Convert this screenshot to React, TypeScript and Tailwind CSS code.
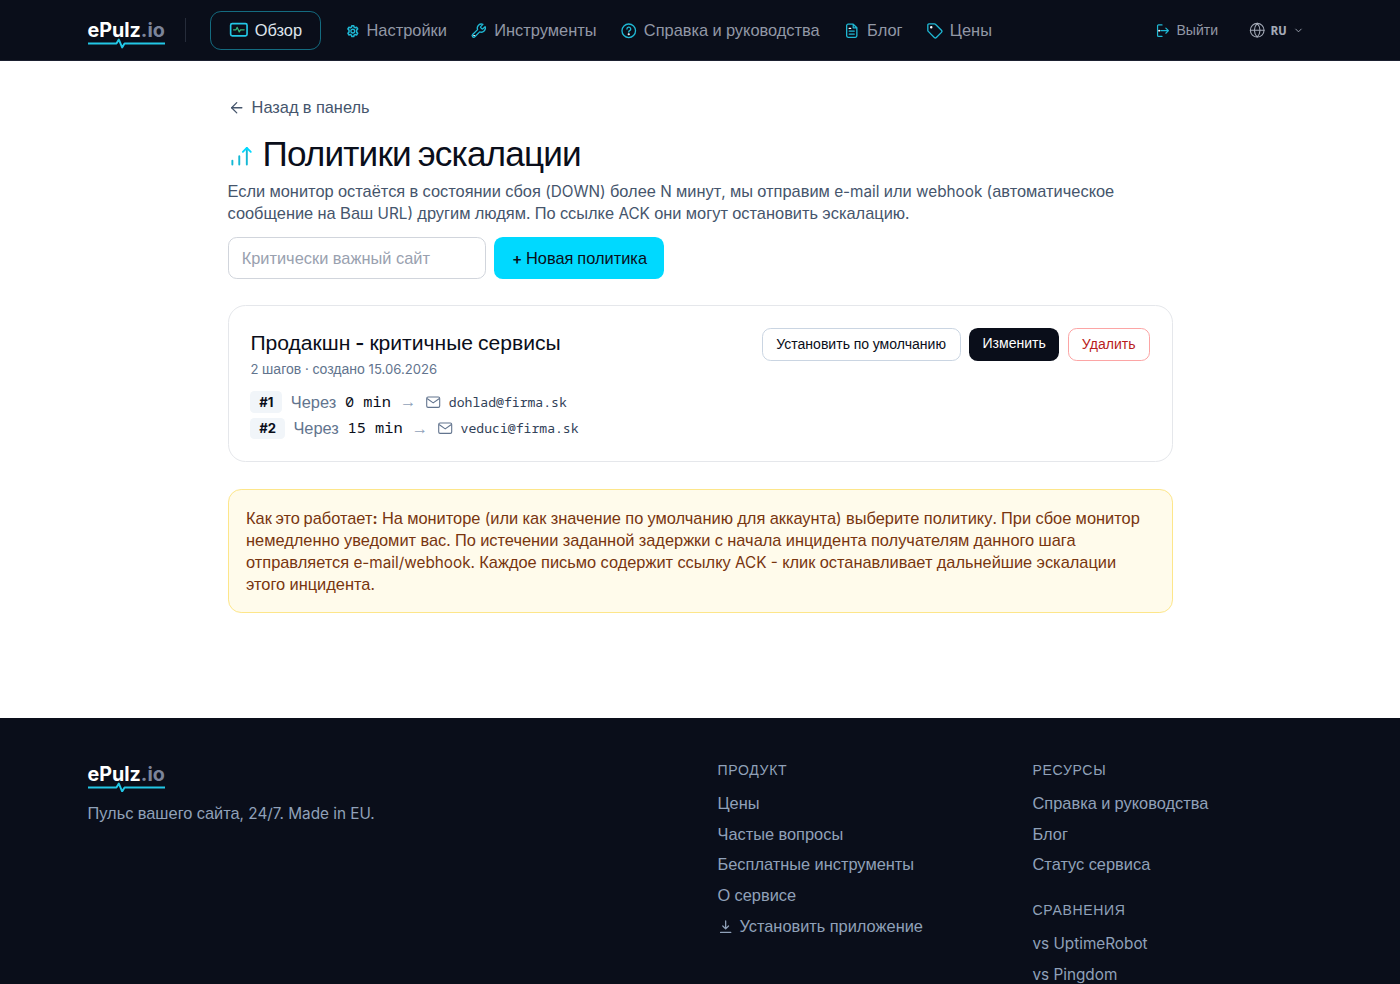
import type { ReactNode } from "react";
import { ArrowLeft, ChevronDown } from "lucide-react";

/** Sets Cyrillic runs in the wider sans face, everything else stays in Inter. */
function T({ children }: { children: string }) {
  return (
    <>
      {children.split(/([\u0400-\u04FF→]+)/).map((part, i) =>
        i % 2 ? (
          <span key={i} className="font-['Liberation_Sans',sans-serif] text-[1.0712em] leading-none font-normal">
            {part}
          </span>
        ) : (
          part
        ),
      )}
    </>
  );
}

function Icon({ children, className = "size-4", width = 1.6 }: { children: ReactNode; className?: string; width?: number }) {
  return (
    <svg
      viewBox="0 0 24 24"
      fill="none"
      stroke="currentColor"
      strokeWidth={width}
      strokeLinecap="round"
      strokeLinejoin="round"
      className={`shrink-0 ${className}`}
    >
      {children}
    </svg>
  );
}

function Logo() {
  return (
    <div className="flex w-[71px] flex-col">
      <div className="pt-[1.5px] text-[18px] leading-5 font-bold text-white">
        ePulz<span className="text-[#7c8499]">.io</span>
      </div>
      <svg viewBox="0 0 71 10" className="-mt-[3.5px] h-2.5 w-[71px]" fill="none" stroke="#22c7e6" strokeWidth="1.8">
        <path d="M0 5h26l2.200-3.600 3 7.200 2.200-3.600H71" strokeLinejoin="round" />
      </svg>
    </div>
  );
}

const navItems = [
  {
    label: "Настройки",
    icon: (
      <>
        <circle cx="14.800" cy="12.500" r="2.600" />
        <path
          d="m13.500 5 2.600 0 .5 2 1.600.9 2-.6 1.300 2.300-1.500 1.500v2.800l1.500 1.500-1.300 2.300-2-.6-1.600.9-.5 2h-2.600l-.5-2-1.600-.9-2 .6-1.300-2.300 1.500-1.500v-2.800l-1.500-1.500 1.300-2.300 2 .6 1.600-.9z"
          strokeWidth="2.100"
        />
      </>
    ),
  },
  {
    label: "Инструменты",
    icon: (
      <>
        <path d="M14.7 6.3a1 1 0 0 0 0 1.4l1.6 1.6a1 1 0 0 0 1.4 0l3-3a5.6 5.6 0 0 1-7.4 7.2L6.6 20.2a2.1 2.1 0 0 1-3-3l6.8-6.700a5.6 5.6 0 0 1 7.3-7.3z" />
        <circle cx="5.5" cy="18.5" r=".5" fill="#fff" stroke="#fff" strokeWidth="1.2" />
      </>
    ),
  },
  {
    label: "Справка и руководства",
    icon: (
      <>
        <circle cx="12" cy="12" r="9.3" />
        <path d="M9.5 9.6a2.6 2.6 0 1 1 3.8 2.3c-.9.5-1.3 1-1.3 1.8" />
        <circle cx="12" cy="16.8" r=".6" fill="#fff" stroke="#fff" />
      </>
    ),
  },
  {
    label: "Блог",
    icon: (
      <>
        <path d="M14 3H7a2 2 0 0 0-2 2v14a2 2 0 0 0 2 2h10a2 2 0 0 0 2-2V8zM14 3v5h5M8.5 12.5h7M8.5 16.5h7" />
        <path d="M8.5 8.8h2" stroke="#fff" />
      </>
    ),
  },
  {
    label: "Цены",
    icon: (
      <>
        <path d="M2.500 4A1.500 1.500 0 0 1 4 2.500h7.500a2 2 0 0 1 1.400.6l8.300 8.300a2 2 0 0 1 0 2.800l-7 7a2 2 0 0 1-2.800 0l-8.300-8.300a2 2 0 0 1-.6-1.400z" />
        <circle cx="7.200" cy="7.200" r=".8" fill="#fff" stroke="#fff" />
      </>
    ),
  },
];

function Header() {
  return (
    <header className="border-b border-[#1b2030] bg-[#0a0e1a]">
      <div className="mx-auto flex h-[55px] w-[1120px] items-center">
        <div className="pt-[7px]">
          <Logo />
        </div>
        <span className="ml-[18px] h-[22px] w-px bg-[#262c3a]" />
        <nav className="ml-[22px] flex items-center gap-[21.3px] text-sm text-[#9298a6]">
          <a className="-mr-[1.3px] mt-px flex h-9 items-center gap-1.5 rounded-[10px] border border-[#146b80] px-4 text-[#dfe4ec]">
            <Icon className="mb-0.5 size-[18px] text-[#22c7e6]">
              <rect x="2" y="4.4" width="20" height="15" rx="2" strokeWidth="2" />
              <path d="M5.500 12h3l1.500-3 2.500 5.500 1.500-2.500h4.500" stroke="#34b57a" strokeWidth="1.500" />
            </Icon>
            <span>
              <T>Обзор</T>
            </span>
          </a>
          {navItems.map((item) => (
            <a key={item.label} className="flex items-center gap-1.5 pt-[1.5px] whitespace-nowrap">
              <Icon className="size-4 text-[#1fb8d4]" width={1.8}>
                {item.icon}
              </Icon>
              <span>
                <T>{item.label}</T>
              </span>
            </a>
          ))}
        </nav>
        <div className="ml-auto flex items-center text-xs text-[#9298a6]">
          <a className="flex items-center gap-1.5 pt-[1.5px]">
            <Icon className="size-3.5 text-[#1fb8d4]">
              <path d="M11 3H5.500A1.500 1.500 0 0 0 4 4.500v15A1.500 1.500 0 0 0 5.500 21H11M9 12h12M17 8l4 4-4 4" strokeWidth="1.900" />
              <circle cx="6.500" cy="12" r=".7" fill="#fff" stroke="#fff" />
            </Icon>
            <span>
              <T>Выйти</T>
            </span>
          </a>
          <a className="ml-[28px] flex items-center pt-[0.5px] pr-[8px] text-[#a3a9b6]">
            <Icon className="size-[15px]">
              <circle cx="12" cy="12" r="10" />
              <path d="M2 12h20M12 2c5.500 6 5.500 14 0 20M12 2c-5.500 6-5.500 14 0 20" />
            </Icon>
            <span className="ml-[5px] font-['Noto_Sans_Mono',monospace] font-bold">RU</span>
            <ChevronDown className="ml-1.5 size-2.5" />
          </a>
        </div>
      </div>
    </header>
  );
}

const steps = [
  { no: "#1", delay: "0 min", email: "dohlad@firma.sk" },
  { no: "#2", delay: "15 min", email: "veduci@firma.sk" },
];

function PolicyCard() {
  return (
    <section className="mt-6 rounded-2xl border border-gray-200 p-5">
      <div className="flex items-start justify-between">
        <div>
          <h2 className="text-lg leading-7 font-semibold text-[#0a0e1a]">
            <T>Продакшн - критичные сервисы</T>
          </h2>
          <p className="mt-0.5 text-xs text-slate-500">
            <T>2 шагов · создано 15.06.2026</T>
          </p>
        </div>
        <div className="flex gap-2 text-xs">
          <button className="rounded-lg border border-slate-300 px-[12.500px] py-1.5 text-[#0a0e1a]">
            <T>Установить по умолчанию</T>
          </button>
          <a className="rounded-lg bg-[#0a0e1a] px-3 py-1.5 text-white">
            <T>Изменить</T>
          </a>
          <button className="rounded-lg border border-[#fca5a5] px-3 py-1.5 text-[#b91c1c]">
            <T>Удалить</T>
          </button>
        </div>
      </div>
      <ol className="mt-3 flex flex-col gap-1">
        {steps.map((s) => (
          <li key={s.no} className="flex h-5 items-center gap-2 text-sm">
            <span className="rounded bg-slate-100 px-2 py-0.5 text-xs font-bold text-[#0a0e1a]">{s.no}</span>
            <span className="pt-px text-slate-500">
              <T>Через</T>
            </span>
            <span className="pb-px font-['Noto_Sans_Mono',monospace] text-[#0a0e1a]">{s.delay}</span>
            <span className="text-slate-400">
              <T>→</T>
            </span>
            <span className="flex items-center gap-[7px] text-slate-700">
              <Icon className="size-[15px] text-slate-500">
                <rect x="2.500" y="4.500" width="19" height="15" rx="2" />
                <path d="m3.500 7 8.500 6 8.500-6" />
              </Icon>
              <span className="font-['Noto_Sans_Mono',monospace] text-xs">{s.email}</span>
            </span>
          </li>
        ))}
      </ol>
    </section>
  );
}

function FooterGroup({ title, links }: { title: string; links: ReactNode[] }) {
  return (
    <div>
      <h3 className="text-xs tracking-wider uppercase">
        <T>{title}</T>
      </h3>
      <ul className="mt-[12.500px] -mb-[0.5px] flex flex-col gap-2">
        {links.map((link, i) => (
          <li key={i} className="h-5">
            {typeof link === "string" ? <T>{link}</T> : link}
          </li>
        ))}
      </ul>
    </div>
  );
}

function Footer() {
  return (
    <footer className="mt-16 grow bg-[#0a0e1a] pt-10 text-sm text-slate-400">
      <div className="mx-auto grid w-[1120px] grid-cols-4 gap-8">
        <div className="col-span-2">
          <Logo />
          <p className="mt-[10px]">
            <T>Пульс вашего сайта, 24/7. Made in EU.</T>
          </p>
        </div>
        <FooterGroup
          title="Продукт"
          links={[
            "Цены",
            "Частые вопросы",
            "Бесплатные инструменты",
            "О сервисе",
            <a className="flex items-center gap-1.5">
              <Icon className="size-3.5" width={2}>
                <path d="M12 3v12M7.500 11l4.500 4.500L16.500 11M4 21h16" />
              </Icon>
              <span>
                <T>Установить приложение</T>
              </span>
            </a>,
          ]}
        />
        <div className="flex flex-col gap-6">
          <FooterGroup title="Ресурсы" links={["Справка и руководства", "Блог", "Статус сервиса"]} />
          <FooterGroup title="Сравнения" links={["vs UptimeRobot", "vs Pingdom"]} />
        </div>
      </div>
    </footer>
  );
}

export default function App() {
  return (
    <div className="h-[984px] overflow-hidden bg-white">
      <div className="flex h-[900px] w-[1280px] flex-col overflow-hidden font-[Inter,sans-serif] [zoom:1.09375]">
        <Header />
        <main className="mx-auto mt-[33px] w-[864px]">
          <a className="flex items-center gap-1.5 text-sm text-slate-600">
            <ArrowLeft className="size-4" strokeWidth={1.75} />
            <span>
              <T>Назад в панель</T>
            </span>
          </a>
          <h1 className="mt-[15px] flex h-9 items-center gap-2 text-3xl leading-9 font-bold tracking-tight text-[#0a0e1a]">
            <Icon className="size-6 text-[#14b8d4]" width={1.75}>
              <path d="M4 17v3.500M10.300 13v7.500M17.200 5.500v15" />
              <path d="m13.600 9 3.600-3.600L20.800 9" stroke="#00d9ff" />
            </Icon>
            <span className="pb-px">
              <T>Политики эскалации</T>
            </span>
          </h1>
          <p className="mt-[6px] text-sm text-slate-600">
            <T>
              Если монитор остаётся в состоянии сбоя (DOWN) более N минут, мы отправим e-mail или webhook (автоматическое сообщение на Ваш URL) другим людям. По ссылке ACK они могут остановить эскалацию.
            </T>
          </p>
          <div className="mt-[11px] flex gap-2">
            <input
              placeholder="Критически важный сайт"
              className="h-[38px] w-[236px] rounded-lg border border-gray-300 px-3 font-['Liberation_Sans',sans-serif] text-[15px] placeholder:text-gray-400"
            />
            <button className="h-[38px] rounded-lg bg-[#00d9ff] pt-px pr-[15.500px] pl-4 text-sm font-semibold text-[#0a0e1a]">
              <T>+ Новая политика</T>
            </button>
          </div>
          <PolicyCard />
          <section className="mt-6 rounded-xl border border-[#fde68a] bg-[#fffbeb] px-4 pt-[17px] pb-[15px] text-sm text-[#78350f]">
            <strong className="font-bold">
              <T>Как это работает:</T>
            </strong>{" "}
            <T>
              На мониторе (или как значение по умолчанию для аккаунта) выберите политику. При сбое монитор немедленно уведомит вас. По истечении заданной задержки с начала инцидента получателям данного шага отправляется e-mail/webhook. Каждое письмо содержит ссылку ACK - клик останавливает дальнейшие эскалации этого инцидента.
            </T>
          </section>
        </main>
        <div className="h-8 shrink-0" />
        <Footer />
        <div className="h-px shrink-0 bg-black" />
      </div>
    </div>
  );
}
